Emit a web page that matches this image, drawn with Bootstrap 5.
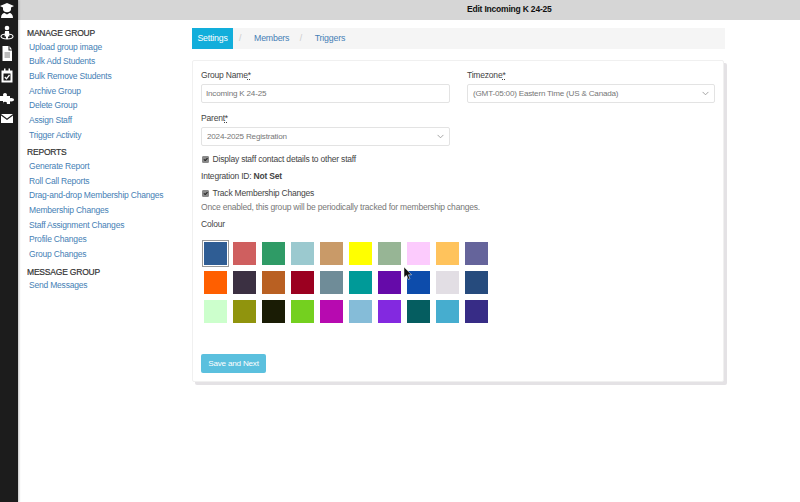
<!DOCTYPE html>
<html lang="en">
<head>
  <meta charset="UTF-8">
  <meta name="viewport" content="width=device-width, initial-scale=1.0">
  <title>Edit Incoming K 24-25</title>
  <link href="https://cdn.jsdelivr.net/npm/bootstrap@5.3.0/dist/css/bootstrap.min.css" rel="stylesheet">
  <style>
    html, body {
      height: 100%;
    }
    body {
      font-family: "Liberation Sans", Arial, sans-serif;
      font-size: 8.5px;
      letter-spacing: -.2px;
      line-height: 1.2;
      color: #333;
      background: #fff;
      overflow: hidden;
    }
    a {
      color: #4580b5;
      text-decoration: none;
    }
    .page-shell {
      height: 502px;
      position: relative;
    }
    .icon-rail {
      width: 18px;
      flex: none;
      background: #1c1c1c;
      box-shadow: 1px 0 2px rgba(0, 0, 0, .25);
      padding: 3px 4px 0 0;
      gap: 6.5px;
      z-index: 1;
    }
    .icon-rail svg {
      display: block;
      width: 14px;
      height: 15px;
      flex: none;
    }
    .title-bar {
      height: 20px;
      background: #d6d6d6;
      padding-left: 449px;
      line-height: 18px;
      font-size: 8.5px;
      font-weight: 700;
      color: #111;
    }
    .side-menu {
      width: 174px;
      flex: none;
      padding: 8px 0 0 9px;
    }
    .side-head {
      font-size: 8.5px;
      letter-spacing: -.2px;
      line-height: 11px;
      color: #333;
      margin: 0 0 2.5px;
      text-transform: uppercase;
      font-weight: 400;
      -webkit-text-stroke: .2px #333;
    }
    .side-links {
      list-style: none;
      margin: 0 0 3px;
      padding: 0 0 0 2px;
    }
    .side-links li {
      height: 14.7px;
      line-height: 11px;
    }
    .edit-pane {
      width: 533px;
      flex: none;
      padding-top: 8px;
    }
    .tab-crumbs {
      height: 21px;
      background: #f5f5f5;
      margin: 0 0 11px;
      align-items: center;
      font-size: 8.8px;
    }
    .tab-crumbs .breadcrumb-item {
      display: flex;
      align-items: center;
      padding-left: 0;
    }
    .tab-crumbs .breadcrumb-item::before {
      display: none;
    }
    .crumb-sep {
      color: #ccc;
      width: 21px;
      padding-left: 6px;
    }
    .crumb-gap {
      margin-right: 4.5px;
    }
    .tab-crumbs .crumb-on {
      background: #12aedb;
      color: #fff;
      height: 21px;
      width: 41px;
      justify-content: center;
    }
    .edit-card {
      width: 532px;
      height: 322px;
      border: 1px solid #f0f0f0;
      border-radius: 2px;
      box-shadow: 3px 3px 0 #e4e2e5;
      padding: 9px 8px 0;
    }
    .edit-card label,
    .plain-line {
      font-size: 8.5px;
      line-height: 11px;
      color: #444;
    }
    .req {
      text-decoration: underline dotted;
    }
    .edit-grid {
      display: grid;
      grid-template-columns: 249px 248px;
      column-gap: 17px;
      margin-bottom: -1px;
    }
    .edit-card .form-control,
    .edit-card .form-select {
      height: 19px;
      min-height: 0;
      margin-top: 3px;
      margin-bottom: 9.5px;
      padding: 0 4px;
      font-size: 8.1px;
      letter-spacing: -.2px;
      line-height: 17px;
      color: #777;
      border: 1px solid #e3e3e3;
      border-radius: 2px;
      box-shadow: none;
    }
    .edit-card .form-select {
      padding-left: 5px;
      background-image: url("data:image/svg+xml,%3csvg xmlns='http://www.w3.org/2000/svg' viewBox='0 0 16 16'%3e%3cpath fill='none' stroke='%23999' stroke-linecap='round' stroke-linejoin='round' stroke-width='2' d='m2 5 6 6 6-6'/%3e%3c/svg%3e");
      background-size: 9px 7px;
      background-position: right 4px center;
    }
    .tick-row {
      min-height: 0;
      padding-left: 0;
      margin: 0;
      gap: 4px;
      height: 11px;
    }
    .tick-row .form-check-input {
      float: none;
      flex: none;
      width: 7px;
      height: 7px;
      margin: 0 0 0 .5px;
      border-radius: 1px;
      background-color: #8a8a8a;
      border-color: #8a8a8a;
      background-size: 7px;
      background-image: url("data:image/svg+xml,%3csvg xmlns='http://www.w3.org/2000/svg' viewBox='0 0 20 20'%3e%3cpath fill='none' stroke='%23222' stroke-linecap='round' stroke-linejoin='round' stroke-width='3' d='m6 10 3 3 6-6'/%3e%3c/svg%3e");
    }
    .line-integration {
      margin-top: 6px;
    }
    .line-track {
      margin-top: 6px;
    }
    .hint-line {
      font-size: 8.5px;
      line-height: 11px;
      color: #777;
      margin-top: 3px;
    }
    .line-colour {
      margin-top: 6px;
    }
    .swatch-grid {
      display: grid;
      grid-template-columns: repeat(10, 23px);
      grid-auto-rows: 23px;
      gap: 6px;
      margin: 12px 0 0 3px;
    }
    .swatch-box {
      display: block;
      width: 23px;
      height: 23px;
    }
    .swatch-on {
      outline: 1px solid #9a9a9a;
      outline-offset: 1px;
    }
    .save-btn {
      display: block;
      width: 65px;
      height: 19px;
      margin-top: 31px;
      padding: 0;
      font-size: 8.1px;
      letter-spacing: -.2px;
      line-height: 19px;
      color: #fff;
      background: #5bc0de;
      border: 0;
      border-radius: 2px;
    }
    .mouse-arrow {
      position: absolute;
      left: 404px;
      top: 267px;
      width: 8px;
      height: 13px;
    }
  </style>
</head>
<body>
<div class="page-shell d-flex">
  <nav class="icon-rail d-flex flex-column align-items-center">
    <!-- graduate -->
    <svg viewBox="0 0 14 15" fill="#fff"><path d="M7 0 14 3 11 4.400V6.500C11 8 9 9.200 7 9.200S3 8 3 6.500V4.400L0 3Z"/><path d="M1 15C1 11.500 3 10 4.500 10L7 11.500 9.500 10C11 10 13 11.500 13 15Z"/></svg>
    <!-- person on a ring -->
    <svg viewBox="0 0 14 15"><circle cx="7" cy="3" r="2.300" fill="#fff"/><path d="M5 6h4l.4 5.500H8v2.500H6v-2.500H4.600Z" fill="#fff"/><ellipse cx="7" cy="11.500" rx="6" ry="2.500" fill="none" stroke="#fff" stroke-width="1.100"/></svg>
    <!-- document -->
    <svg viewBox="0 0 14 15"><path d="M2.500 0H8.500V4.500H12V15H2.500Z" fill="#fff"/><path d="M9.500 0 12 3.500H9.500Z" fill="#fff"/><path d="M4.500 7h5.500M4.500 9h5.500M4.500 11h5.500" stroke="#777" stroke-width="1"/></svg>
    <!-- calendar check -->
    <svg viewBox="0 0 14 15"><path d="M1.500 2.500H12.500V14.500H1.500Z" fill="#fff"/><path d="M3.500 5.500H10.500V12.500H3.500Z" fill="#1c1c1c"/><path d="M4 0.500h1.500v3H4ZM8.500 0.500H10v3H8.500Z" fill="#fff"/><path d="M4.800 9 6.500 10.800 9.500 7" fill="none" stroke="#fff" stroke-width="1.300"/></svg>
    <!-- puzzle piece -->
    <svg viewBox="0 0 14 15" fill="#fff"><path d="M0 7H3.200C2.600 5 3.600 4 5 4S7.400 5 6.800 7H10V9.200C12 8.600 14 9.400 14 10.700S12 12.800 10 12.200V15H6.800C7.400 13.500 6.400 12.800 5 12.800S2.600 13.500 3.200 15H3V12H0Z"/></svg>
    <!-- envelope -->
    <svg viewBox="0 0 14 15"><path d="M1 3H13L7 7.500Z" fill="#fff"/><path d="M1 4.500 7 9 13 4.500V12H1Z" fill="#fff"/></svg>
  </nav>

  <div class="flex-grow-1 d-flex flex-column">
    <div class="title-bar">Edit Incoming K 24-25</div>
    <div class="d-flex">
      <aside class="side-menu">
        <h6 class="side-head">Manage Group</h6>
        <ul class="side-links">
          <li><a href="#">Upload group image</a></li>
          <li><a href="#">Bulk Add Students</a></li>
          <li><a href="#">Bulk Remove Students</a></li>
          <li><a href="#">Archive Group</a></li>
          <li><a href="#">Delete Group</a></li>
          <li><a href="#">Assign Staff</a></li>
          <li><a href="#">Trigger Activity</a></li>
        </ul>
        <h6 class="side-head">Reports</h6>
        <ul class="side-links">
          <li><a href="#">Generate Report</a></li>
          <li><a href="#">Roll Call Reports</a></li>
          <li><a href="#">Drag-and-drop Membership Changes</a></li>
          <li><a href="#">Membership Changes</a></li>
          <li><a href="#">Staff Assignment Changes</a></li>
          <li><a href="#">Profile Changes</a></li>
          <li><a href="#">Group Changes</a></li>
        </ul>
        <h6 class="side-head">Message Group</h6>
        <ul class="side-links">
          <li><a href="#">Send Messages</a></li>
        </ul>
      </aside>

      <main class="edit-pane">
        <ol class="breadcrumb tab-crumbs">
          <li class="breadcrumb-item crumb-on">Settings</li>
          <li class="breadcrumb-item crumb-gap"><span class="crumb-sep">/</span><a href="#">Members</a></li>
          <li class="breadcrumb-item"><span class="crumb-sep">/</span><a href="#">Triggers</a></li>
        </ol>

        <form class="card edit-card">
          <div class="edit-grid">
            <div>
              <label for="groupName">Group Name<span class="req">*</span></label>
              <input id="groupName" type="text" class="form-control" value="Incoming K 24-25">
            </div>
            <div>
              <label for="timezone">Timezone<span class="req">*</span></label>
              <select id="timezone" class="form-select">
                <option>(GMT-05:00) Eastern Time (US &amp; Canada)</option>
              </select>
            </div>
            <div>
              <label for="parent">Parent<span class="req">*</span></label>
              <select id="parent" class="form-select">
                <option>2024-2025 Registration</option>
              </select>
            </div>
          </div>
          <div class="form-check tick-row d-flex align-items-center">
            <input id="showContact" class="form-check-input" type="checkbox" checked>
            <label for="showContact">Display staff contact details to other staff</label>
          </div>
          <div class="plain-line line-integration">Integration ID: <b>Not Set</b></div>
          <div class="form-check tick-row d-flex align-items-center line-track">
            <input id="trackChanges" class="form-check-input" type="checkbox" checked>
            <label for="trackChanges">Track Membership Changes</label>
          </div>
          <div class="hint-line">Once enabled, this group will be periodically tracked for membership changes.</div>
          <div class="plain-line line-colour">Colour</div>
          <div class="swatch-grid" id="swatches"></div>
          <button type="button" class="btn save-btn">Save and Next</button>
        </form>
      </main>
    </div>
  </div>

  <svg class="mouse-arrow" viewBox="0 0 8 13"><path d="M0 0V10.500L2.500 8.300 4.300 12.500 6 11.700 4.300 7.800H7.600Z" fill="#111" stroke="#fff" stroke-width=".5"/></svg>
</div>

<script>
  const colours = [
    '#2f5d94', '#cf5f5f', '#2f9b66', '#9bc9cf', '#c99a68', '#ffff00', '#97b595', '#fccbfd', '#ffc35c', '#65649b',
    '#ff5f00', '#3b3042', '#b96022', '#9b0020', '#6f8c98', '#009a98', '#650aa9', '#0d4cab', '#e2dee4', '#264b7d',
    '#ccffcc', '#90940d', '#1a1c05', '#74d01f', '#b70ab0', '#85bcd8', '#8329e0', '#055d60', '#46adcf', '#372c86'
  ];
  const box = document.getElementById('swatches');
  colours.forEach((c, i) => {
    const s = document.createElement('span');
    s.className = 'swatch-box' + (i === 0 ? ' swatch-on' : '');
    s.style.background = c;
    box.appendChild(s);
  });
</script>
<script src="https://cdn.jsdelivr.net/npm/bootstrap@5.3.0/dist/js/bootstrap.bundle.min.js"></script>
</body>
</html>
